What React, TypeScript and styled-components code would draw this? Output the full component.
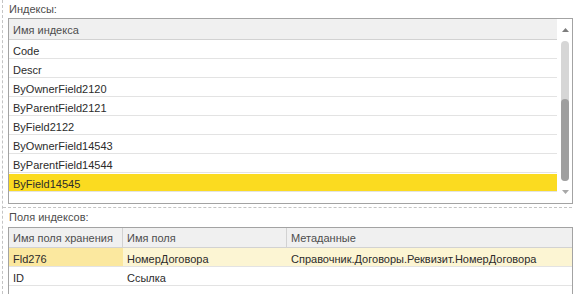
import React from "react";
import styled, { createGlobalStyle } from "styled-components";

const Global = createGlobalStyle`
  html, body { margin: 0; padding: 0; background: #fff; }
  body { font-family: "Liberation Sans", Arial, sans-serif; font-size: 11px; color: #2b2b2b; }
  * { box-sizing: border-box; }
`;

const Page = styled.div`
  width: 580px;
  height: 294px;
  overflow: hidden;
  padding-left: 2px;
`;

const Group = styled.div`
  border-left: 1px dashed #c4c4c4;
  height: 100%;
  width: 570px;
`;

const Section = styled.section<{ $divider?: boolean }>`
  padding-left: 5px;
  padding-bottom: ${(p) => (p.$divider ? "3px" : "0")};
  border-bottom: ${(p) => (p.$divider ? "1px dashed #c4c4c4" : "none")};
`;

const Label = styled.div<{ $h: number }>`
  height: ${(p) => p.$h}px;
  padding-top: 3px;
  padding-left: 1px;
  line-height: 13px;
  color: #4d4d4d;
`;

const Box = styled.div<{ $h: number }>`
  width: 565px;
  height: ${(p) => p.$h}px;
  border: 1px solid #a3a3a3;
  display: flex;
  overflow: hidden;
`;

const ListArea = styled.div`
  flex: 1;
  display: flex;
  flex-direction: column;
`;

const HeadRow = styled.div<{ $h: number }>`
  height: ${(p) => p.$h}px;
  background: #f0f0f0;
  border-bottom: 1px solid #d2d2d2;
  display: flex;
  align-items: center;
  color: #4d4d4d;
  flex-shrink: 0;
`;

const HeadCell = styled.div<{ $w?: number; $last?: boolean }>`
  ${(p) => (p.$w ? `width: ${p.$w}px;` : "flex: 1;")}
  height: 100%;
  display: flex;
  align-items: center;
  padding-left: 4px;
  padding-top: 1px;
  border-right: ${(p) => (p.$last ? "none" : "1px solid #d2d2d2")};
`;

const Row = styled.div<{ $sel?: "strong" | "soft" }>`
  height: 19px;
  flex-shrink: 0;
  border-bottom: 1px solid #e3e3e3;
  display: flex;
  align-items: center;
  background: ${(p) =>
    p.$sel === "strong" ? "#fbdb20" : p.$sel === "soft" ? "#fcf5d3" : "#fff"};
  box-shadow: ${(p) => (p.$sel === "strong" ? "inset 0 1px 0 #fff" : "none")};
`;

const Cell = styled.div<{ $w?: number; $focus?: boolean }>`
  ${(p) => (p.$w ? `width: ${p.$w}px;` : "flex: 1;")}
  height: 100%;
  display: flex;
  align-items: center;
  padding-left: 4px;
  padding-top: 3px;
  background: ${(p) => (p.$focus ? "#fbe89f" : "transparent")};
  white-space: nowrap;
`;

const Scrollbar = styled.div`
  width: 15px;
  display: flex;
  flex-direction: column;
  align-items: center;
  padding-left: 1px;
`;

const Arrow = styled.div`
  height: 22px;
  flex-shrink: 0;
  display: flex;
  align-items: center;
  justify-content: center;
`;

const Track = styled.div`
  width: 8px;
  flex: 1;
  border-radius: 4px;
  background: #d6d6d6;
  display: flex;
  flex-direction: column;
  justify-content: flex-end;
`;

const Thumb = styled.div`
  height: 82px;
  border-radius: 4px;
  background: #9f9f9f;
`;

const indexes = [
  "Code",
  "Descr",
  "ByOwnerField2120",
  "ByParentField2121",
  "ByField2122",
  "ByOwnerField14543",
  "ByParentField14544",
  "ByField14545",
];

export default function App() {
  return (
    <>
      <Global />
      <Page>
        <Group>
          <Section $divider>
            <Label $h={18}>Индексы:</Label>
            <Box $h={186}>
              <ListArea>
                <HeadRow $h={21}>
                  <HeadCell $last>Имя индекса</HeadCell>
                </HeadRow>
                {indexes.map((name, i) => (
                  <Row key={name} $sel={i === indexes.length - 1 ? "strong" : undefined}>
                    <Cell>{name}</Cell>
                  </Row>
                ))}
              </ListArea>
              <Scrollbar>
                <Arrow>
                  <svg width="7" height="4" viewBox="0 0 7 4">
                    <path d="M3.5 0 L7 4 L0 4 Z" fill="#7d7d7d" />
                  </svg>
                </Arrow>
                <Track>
                  <Thumb />
                </Track>
                <Arrow>
                  <svg width="7" height="4" viewBox="0 0 7 4">
                    <path d="M0 0 L7 0 L3.5 4 Z" fill="#a8a8a8" />
                  </svg>
                </Arrow>
              </Scrollbar>
            </Box>
          </Section>
          <Section>
            <Label $h={19}>Поля индексов:</Label>
            <Box $h={80}>
              <ListArea>
                <HeadRow $h={20}>
                  <HeadCell $w={114}>Имя поля хранения</HeadCell>
                  <HeadCell $w={164}>Имя поля</HeadCell>
                  <HeadCell $last>Метаданные</HeadCell>
                </HeadRow>
                <Row $sel="soft">
                  <Cell $w={114} $focus>Fld276</Cell>
                  <Cell $w={164}>НомерДоговора</Cell>
                  <Cell>Справочник.Договоры.Реквизит.НомерДоговора</Cell>
                </Row>
                <Row>
                  <Cell $w={114}>ID</Cell>
                  <Cell $w={164}>Ссылка</Cell>
                  <Cell />
                </Row>
              </ListArea>
            </Box>
          </Section>
        </Group>
      </Page>
    </>
  );
}
